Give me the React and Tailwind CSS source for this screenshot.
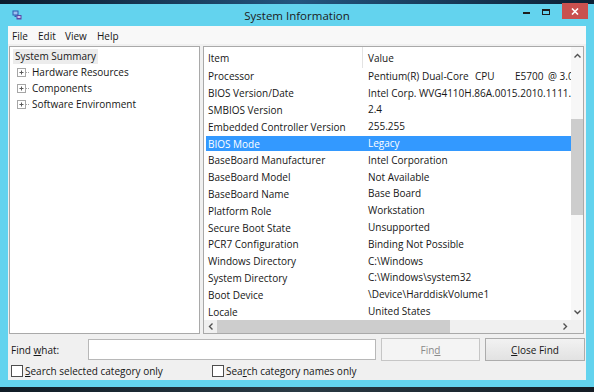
import React from "react";

const rows = [
  ["Processor", "proc"],
  ["BIOS Version/Date", "Intel Corp. WVG4110H.86A.0015.2010.1111.1830, 11/11/2010"],
  ["SMBIOS Version", "2.4"],
  ["Embedded Controller Version", "255.255"],
  ["BIOS Mode", "Legacy"],
  ["BaseBoard Manufacturer", "Intel Corporation"],
  ["BaseBoard Model", "Not Available"],
  ["BaseBoard Name", "Base Board"],
  ["Platform Role", "Workstation"],
  ["Secure Boot State", "Unsupported"],
  ["PCR7 Configuration", "Binding Not Possible"],
  ["Windows Directory", "C:\\Windows"],
  ["System Directory", "C:\\Windows\\system32"],
  ["Boot Device", "\\Device\\HarddiskVolume1"],
  ["Locale", "United States"],
];

function Plus() {
  return (
    <svg width="14" height="9" viewBox="0 0 14 9" className="shrink-0">
      <rect x="0.5" y="0.5" width="8" height="8" fill="#fff" stroke="#a6a6a6" />
      <line x1="2.5" y1="4.5" x2="6.5" y2="4.5" stroke="#5a5a5a" />
      <line x1="4.5" y1="2.5" x2="4.5" y2="6.5" stroke="#5a5a5a" />
      <line x1="9" y1="4.5" x2="13" y2="4.5" stroke="#a6a6a6" strokeDasharray="1 1" />
    </svg>
  );
}

function Chevron({ dir }) {
  const d = {
    up: "M0.5 4.5 L3.5 1.5 L6.5 4.5",
    down: "M0.5 1.5 L3.5 4.5 L6.5 1.5",
    left: "M4.5 0.5 L1.5 3.5 L4.5 6.5",
    right: "M1.5 0.5 L4.5 3.5 L1.5 6.5",
  }[dir];
  const vertical = dir === "up" || dir === "down";
  return (
    <svg width={vertical ? 7 : 6} height={vertical ? 6 : 7} viewBox={vertical ? "0 0 7 6" : "0 0 6 7"}>
      <path d={d} fill="none" stroke="#505050" strokeWidth="1.4" />
    </svg>
  );
}

function ProcessorValue() {
  return (
    <span className="whitespace-nowrap">
      <span className="inline-block w-[107px]">Pentium(R) Dual-Core</span>
      <span className="inline-block w-[40px]">CPU</span>
      <span className="inline-block w-[33px]">E5700</span>
      <span>@ 3.00GHz</span>
    </span>
  );
}

export default function App() {
  return (
    <div className="w-[594px] h-[392px] overflow-hidden flex flex-col bg-[#0e1c2a] font-['Open_Sans',sans-serif] text-[10px] text-[#161616] leading-[14px]">
      {/* desktop strip */}
      <div className="h-[4px] shrink-0 bg-linear-to-r from-[#0b1b2c] via-[#23557e] to-[#0c2034]" />
      {/* window */}
      <div className="flex-1 flex flex-col bg-[#63d3ee]">
        {/* title bar */}
        <div className="h-[22px] shrink-0 grid grid-cols-[1fr_auto_1fr]">
          <div className="flex items-center pl-[12px]">
            <svg width="10" height="10" viewBox="0 0 10 10">
              <rect x="0.5" y="0.5" width="6" height="5" fill="#2e58ad" />
              <rect x="1.5" y="1.5" width="4" height="3" fill="#9cc2f2" />
              <rect x="2.5" y="5.5" width="2" height="1.5" fill="#2e58ad" />
              <rect x="4.5" y="5" width="5" height="4.5" fill="#5b48a6" />
              <rect x="5.5" y="6" width="3" height="2" fill="#c9c2ee" />
            </svg>
          </div>
          <div className="flex items-center justify-center pt-[1px] text-[11.5px] text-[#202020]">
            System Information
          </div>
          <div className="flex items-start justify-end pr-[6px]">
            <div className="w-[20px] h-[15px] flex items-center justify-center">
              <div className="w-[7px] h-[2px] bg-[#1e1e1e] mt-[3px]" />
            </div>
            <div className="w-[20px] h-[15px] flex items-center justify-center">
              <div className="w-[8px] h-[6px] border border-[#1e1e1e] border-t-2" />
            </div>
            <div className="ml-[6px] w-[26px] h-[16px] -mt-[1px] bg-[#c9504f] flex items-center justify-center">
              <svg width="8" height="7" viewBox="0 0 8 7">
                <path d="M1 0.5 L7 6.5 M7 0.5 L1 6.5" stroke="#fff" strokeWidth="1.6" />
              </svg>
            </div>
          </div>
        </div>

        {/* client area */}
        <div className="mx-[8px] h-[354px] shrink-0 bg-[#f0f0f0] flex flex-col">
          {/* menu */}
          <div className="h-[18px] shrink-0 bg-[#f8f8f8] flex items-center pl-[4px] pt-[1px]">
            <span className="w-[26px]">File</span>
            <span className="w-[27px]">Edit</span>
            <span className="w-[32px]">View</span>
            <span>Help</span>
          </div>

          {/* panes */}
          <div className="mt-[2px] h-[288px] shrink-0 flex">
            {/* left tree */}
            <div className="ml-[1px] w-[191px] bg-white border border-[#a9a9a9] pt-[1px] flex flex-col">
              <div className="h-[16px] flex items-center">
                <span className="ml-[3px] px-[2px] h-[15px] flex items-center bg-[#ececec]">System Summary</span>
              </div>
              {["Hardware Resources", "Components", "Software Environment"].map((t) => (
                <div key={t} className="h-[16px] flex items-center pl-[7px] gap-[1px]">
                  <Plus />
                  <span>{t}</span>
                </div>
              ))}
            </div>

            {/* right list */}
            <div className="ml-[3px] w-[381px] bg-white border border-[#a9a9a9] flex flex-col">
              <div className="flex-1 flex">
                <div className="flex-1 flex flex-col overflow-hidden">
                  <div className="h-[21px] shrink-0 flex items-center">
                    <div className="w-[159px] pl-[4px] h-full flex items-center border-r border-[#e3e3e3]">Item</div>
                    <div className="pl-[5px]">Value</div>
                  </div>
                  {rows.map(([k, v]) => {
                    const sel = k === "BIOS Mode";
                    return (
                      <div key={k} className="h-[16.8px] shrink-0 flex items-center">
                        <div
                          className={
                            "ml-[2px] flex-1 h-[15px] flex items-center " +
                            (sel ? "bg-[#3399ff] text-white" : "")
                          }
                        >
                          <div className="w-[157px] shrink-0 pl-[2px] whitespace-nowrap">{k}</div>
                          <div className="pl-[5px] whitespace-nowrap overflow-x-hidden flex-1 min-w-0 h-[15px]">
                            {v === "proc" ? <ProcessorValue /> : v}
                          </div>
                        </div>
                      </div>
                    );
                  })}
                </div>
                {/* vertical scrollbar */}
                <div className="w-[12px] shrink-0 bg-[#f7f7f7] flex flex-col">
                  <div className="h-[17px] flex items-center justify-center">
                    <Chevron dir="up" />
                  </div>
                  <div className="flex-1">
                    <div className="mt-[55px] h-[96px] bg-[#cdcdcd]" />
                  </div>
                  <div className="h-[17px] flex items-center justify-center">
                    <Chevron dir="down" />
                  </div>
                </div>
              </div>
              {/* horizontal scrollbar */}
              <div className="h-[13px] shrink-0 flex">
                <div className="flex-1 flex bg-[#f0f0f0]">
                  <div className="w-[13px] flex items-center justify-center">
                    <Chevron dir="left" />
                  </div>
                  <div className="w-[233px] bg-[#cdcdcd]" />
                  <div className="flex-1" />
                  <div className="w-[12px] flex items-center justify-center">
                    <Chevron dir="right" />
                  </div>
                </div>
                <div className="w-[12px] bg-[#f0f0f0]" />
              </div>
            </div>
          </div>

          {/* find row */}
          <div className="mt-[4px] h-[23px] shrink-0 flex items-center">
            <div className="w-[80px] pl-[3px]">
              Find <span className="underline">w</span>hat:
            </div>
            <div className="w-[288px] h-[21px] bg-white border border-[#b8b8b8]" />
            <div className="ml-[5px] w-[99px] h-[23px] bg-[#f4f4f4] border border-[#c6c6c6] flex items-center justify-center text-[#8a8a8a]">
              Fin<span className="underline">d</span>
            </div>
            <div className="ml-[5px] w-[100px] h-[23px] bg-linear-to-b from-[#f2f2f2] to-[#e2e2e2] border border-[#acacac] flex items-center justify-center">
              <span className="underline">C</span>lose Find
            </div>
          </div>

          {/* checkbox row */}
          <div className="h-[19px] shrink-0 flex items-center pt-[1px]">
            <div className="ml-[3px] w-[12px] h-[12px] bg-white border border-[#4d4d4d]" />
            <span className="ml-[2px] w-[187px]">
              <span className="underline">S</span>earch selected category only
            </span>
            <div className="w-[12px] h-[12px] bg-white border border-[#4d4d4d]" />
            <span className="ml-[2px]">
              Sea<span className="underline">r</span>ch category names only
            </span>
          </div>
        </div>

        <div className="h-[7px] shrink-0" />
      </div>
      <div className="h-[5px] shrink-0 bg-linear-to-r from-[#101c26] via-[#2a3a44] to-[#141c24]" />
    </div>
  );
}
